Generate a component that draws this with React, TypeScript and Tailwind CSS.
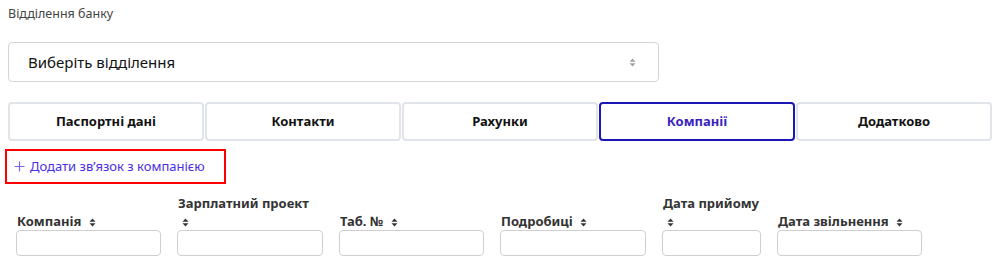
import React from 'react';

const tabs = ['Паспортні дані', 'Контакти', 'Рахунки', 'Компанії', 'Додатково'];

const columns = [
  { title: 'Компанія', width: 'w-[145px]' },
  { title: 'Зарплатний проект', width: 'w-[146px]' },
  { title: 'Таб. №', width: 'w-[145px]' },
  { title: 'Подробиці', width: 'w-[146px]' },
  { title: 'Дата прийому', width: 'w-[99px]' },
  { title: 'Дата звільнення', width: 'w-[145px]' },
];

function SortIcon({ className = '' }: { className?: string }) {
  return (
    <svg width="7" height="9" viewBox="0 0 7 9" className={`inline-block ${className}`}>
      <path d="M3.5 0.5 L6.5 3.8 L0.5 3.8 Z" fill="currentColor" />
      <path d="M3.5 8.5 L6.5 5.2 L0.5 5.2 Z" fill="currentColor" />
    </svg>
  );
}

export default function App() {
  return (
    <div className="w-[1003px] h-[272px] bg-white font-['Noto_Sans','Open_Sans',sans-serif] overflow-hidden">
      {/* Bank branch */}
      <div className="pl-2 pt-[5px] text-[12.5px] leading-[18px] text-[#444]">Відділення банку</div>

      <div className="ml-2 mt-[19px] w-[651px] h-[40px] border border-[#d4d4d4] rounded-[4px] flex items-center justify-between pl-[19px] pr-[22px]">
        <span className="text-[15px] text-[#111]">Виберіть відділення</span>
        <SortIcon className="text-[#9aa0a6]" />
      </div>

      {/* Tabs */}
      <div className="ml-2 mt-5 w-[984px] flex gap-px">
        {tabs.map((t) => {
          const active = t === 'Компанії';
          return (
            <div
              key={t}
              className={`flex-1 h-[39px] rounded-[4px] flex items-center justify-center text-[13px] font-bold ${
                active ? 'border-2 border-[#1c16b4] text-[#3a1fc2]' : 'border-2 border-[#e1e4e8] text-[#111]'
              }`}
            >
              {t}
            </div>
          );
        })}
      </div>

      {/* Add link */}
      <div className="ml-[5px] mt-[8px] w-[221px] h-[35px] border-2 border-[#ff0000] flex items-center pl-[7px] text-[13px] text-[#4a2de6]">
        <svg width="11" height="11" viewBox="0 0 11 11" className="mr-[5px] text-[#7a66e6]">
          <path d="M5.5 0.5 V10.5 M0.5 5.5 H10.5" stroke="currentColor" strokeWidth="1.2" />
        </svg>
        <span>Додати зв’язок з компанією</span>
      </div>

      {/* Table header */}
      <div className="ml-4 mt-[10px] flex gap-4">
        {columns.map((c) => (
          <div key={c.title} className={`${c.width} shrink-0 flex flex-col`}>
            <div className="h-[36px] flex items-end pl-px">
              <div className="text-[13px] font-bold leading-[18px] text-[#333]">
                <span className="whitespace-nowrap">{c.title}</span>{' '}
                <SortIcon className="ml-[4px] text-[#333]" />
              </div>
            </div>
            <div className="h-[26px] border border-[#cfcfcf] rounded-[4px]" />
          </div>
        ))}
      </div>
    </div>
  );
}
